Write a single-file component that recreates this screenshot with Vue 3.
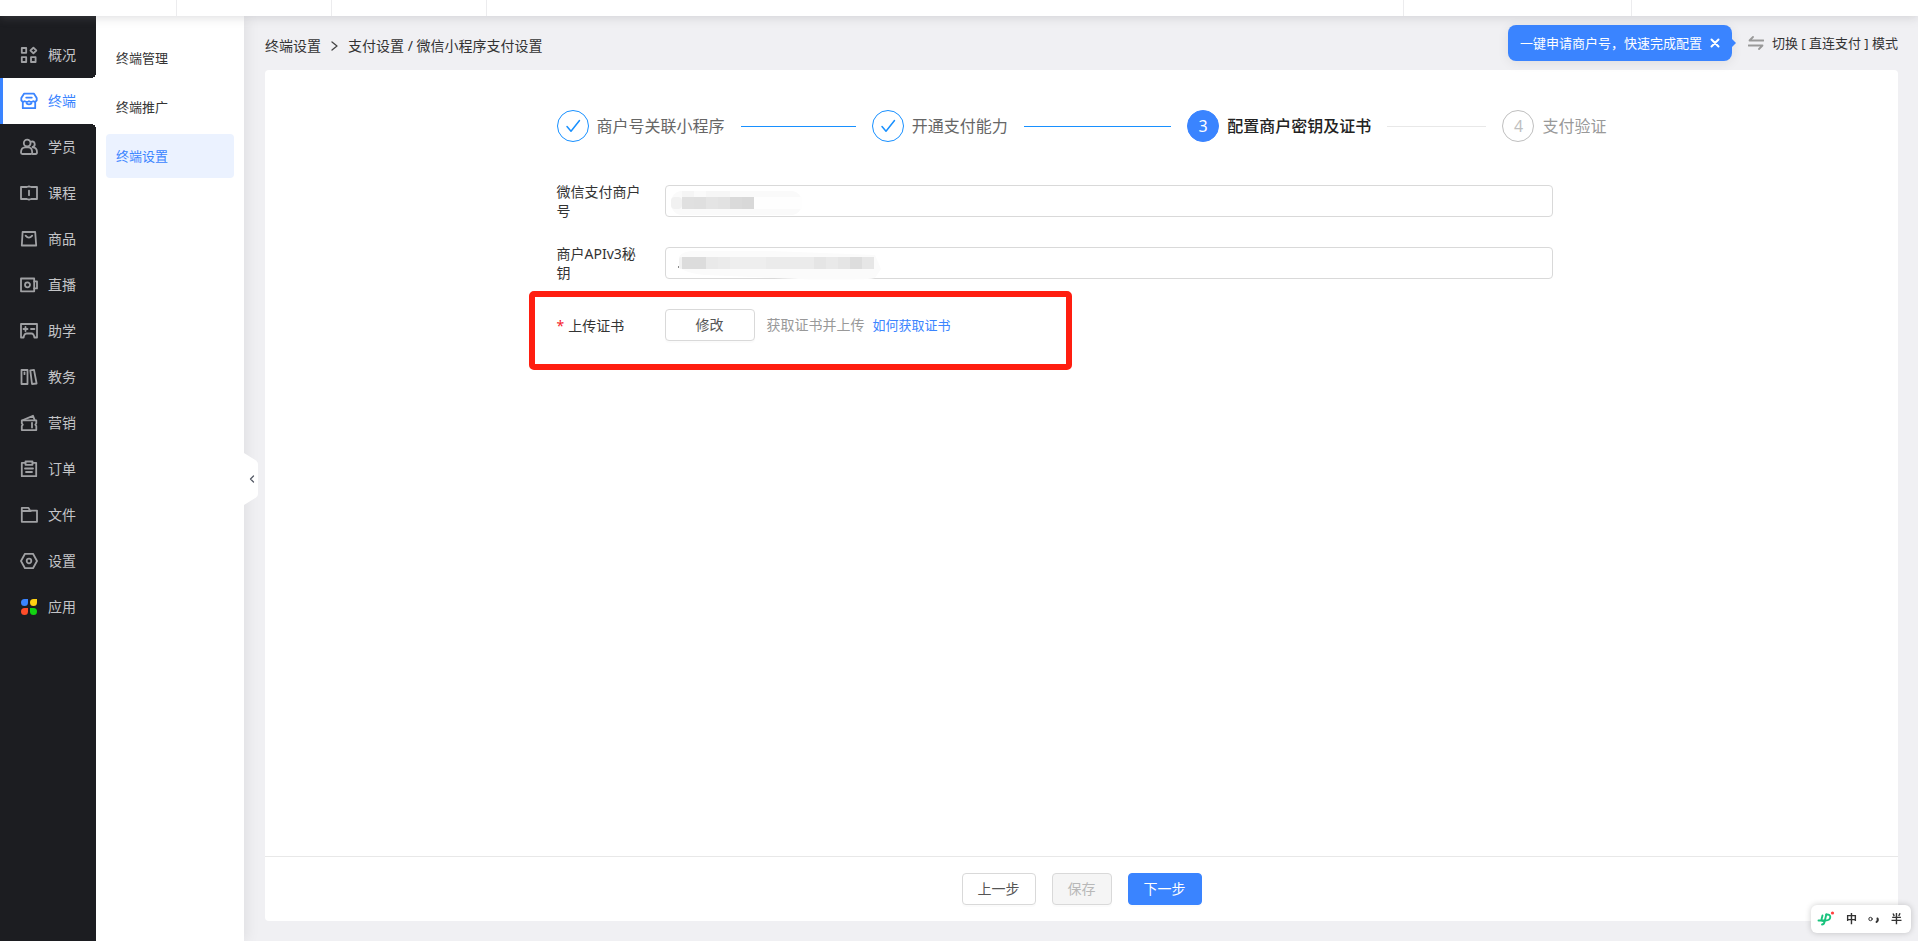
<script setup>
import { ref } from 'vue'

const navItems = [
  { name: '概况', paths: ['M1.8 2h4.4v4.8H1.8z', 'M1.8 11.2h4.4v4.8H1.8z', 'M11 11.2h4.6v4.8H11z', 'M13.4 1.6 16.3 4.5 13.4 7.4 10.5 4.5z'] },
  { name: '终端', active: true, paths: ['M4 1.7h10l2.7 4.2v2.6q-1.5 2-3.4.6-2 1.8-4.3 0-2.3 1.8-4.3 0-1.9 1.4-3.4-.6V5.9z', 'M2.8 10.2v6h12.4v-6', 'M6.2 5.6h5.6', 'M6.6 11.6q2.4 1.6 4.8 0'] },
  { name: '学员', paths: ['M7.2 1.7a3.4 3.4 0 0 1 0 6.8 3.4 3.4 0 0 1 0-6.8z', 'M1 14.5c0-3.2 1.6-5.2 4.2-5.2h3c2.8 0 4 2 4 5.2 0 1-.5 1.5-1.4 1.5H2.4C1.4 16 1 15.5 1 14.5z', 'M11.4 3.6a2.7 2.7 0 0 1 1.2 5.3', 'M12.6 9.3c2.8 0 4.4 2 4.4 5 0 1.2-.5 1.7-1.5 1.7h-3'] },
  { name: '课程', paths: ['M1 3h5.8L9 2.4 11.2 3H17v12h-5.8L9 15.7 6.8 15H1z', 'M9 6.6v4.6'] },
  { name: '商品', paths: ['M2.6 2h12.6l1 13.5H1.8z', 'M5.6 5.6q3.3 4 6.6 0'] },
  { name: '直播', paths: ['M1 2.5h13.2v12.8H1z', 'M14.2 5.4H17v7h-2.8', 'M7.5 6.3a2.5 2.5 0 1 1 0 5 2.5 2.5 0 0 1 0-5z'] },
  { name: '助学', paths: ['M1 2h16v13.5h-2.6q-.6-4-3-4h-4.800q-2.4 0-3 4H1z', 'M5.500 5v4M3.500 7h4', 'M11 7h3.400'] },
  { name: '教务', paths: ['M1.5 2h6v14h-6z', 'M10.3 2.3l3.7-.5 2.600 13.700-4.600.5z', 'M4.500 4.500v1.700'] },
  { name: '营销', paths: ['M1.8 6.3h14.5v3l-1 1.4 1 1.4v4H1.8v-4l1-1.4-1-1.4z', 'M3 6l10-4.2 1.700 4.200', 'M12 8.800v4.800'] },
  { name: '订单', paths: ['M5.5 2.8H1.8v13.4h14.4V2.8h-3.7', 'M5.5 1.500h7v3.300h-7z', 'M5 8.500h8M6 12h6'] },
  { name: '文件', paths: ['M1.8 15.800V1.800h6.700l1.500 2.800h7v11.200z', 'M1.800 5h9'] },
  { name: '设置', paths: ['M5 1.800h8L17 9l-4 7.200H5L1 9z', 'M9 6.700a2.300 2.300 0 1 1 0 4.600 2.300 2.300 0 0 1 0-4.600z'] },
  { name: '应用', colorful: true }
]

const subItems = [
  { name: '终端管理' },
  { name: '终端推广' },
  { name: '终端设置', active: true }
]

const steps = [
  { title: '商户号关联小程序', state: 'done' },
  { title: '开通支付能力', state: 'done' },
  { title: '配置商户密钥及证书', state: 'current' },
  { title: '支付验证', state: 'wait' }
]

const tipVisible = ref(true)
</script>

<template>
  <div class="app">
    <header class="topbar">
      <span class="cell c1"></span>
      <span class="cell c2"></span>
      <span class="cell c2"></span>
      <span class="cell grow"></span>
      <span class="cell c3"></span>
      <span class="cell c4"></span>
    </header>

    <div class="body">
      <nav class="nav" aria-label="主导航">
        <a v-for="item in navItems" :key="item.name" href="#" class="nav-item" :class="{ active: item.active }">
          <svg v-if="item.colorful" class="nav-icon" viewBox="0 0 18 18">
            <path fill="#3a84ff" d="M4.500 1H8v3.500A3.500 3.500 0 1 1 4.500 1z" />
            <path fill="#ffd012" d="M13.500 1H17v3.500A3.500 3.500 0 1 1 13.500 1z" />
            <path fill="#ff4d2a" d="M4.500 10H8v3.500A3.500 3.500 0 1 1 4.500 10z" />
            <path fill="#12d312" d="M10 10h3.500a3.500 3.500 0 1 1-3.500 3.500z" />
          </svg>
          <svg v-else class="nav-icon" viewBox="0 0 18 18">
            <path v-for="d in item.paths" :key="d" :d="d" />
          </svg>
          <span>{{ item.name }}</span>
        </a>
      </nav>

      <aside class="subnav">
        <a v-for="item in subItems" :key="item.name" href="#" class="sub-item" :class="{ active: item.active }">{{ item.name }}</a>
        <button class="collapse" aria-label="收起菜单">
          <svg class="collapse-bg" viewBox="0 0 14 52"><path d="M0 0 12 7.500Q14 9 14 11v30q0 2-2 3.500L0 52z" /></svg>
          <svg class="collapse-arrow" viewBox="0 0 6 8"><path d="M4.500 1 1.500 4l3 3" /></svg>
        </button>
      </aside>

      <main class="main">
        <div class="page-head">
          <div class="crumbs">
            <a href="#">终端设置</a>
            <svg class="crumb-arrow" viewBox="0 0 7 10"><path d="M1 1l5 4-5 4" /></svg>
            <span>支付设置 / 微信小程序支付设置</span>
          </div>
          <div class="mode">
            <div v-if="tipVisible" class="tip">
              <span>一键申请商户号，快速完成配置</span>
              <button class="tip-close" aria-label="关闭" @click="tipVisible = false">
                <svg viewBox="0 0 10 10"><path d="M1.500 1.500l7 7M8.500 1.500l-7 7" /></svg>
              </button>
            </div>
            <button class="switch">
              <svg class="swap" viewBox="0 0 16 14"><path d="M15.500 4.500H1.500L5 1M.5 9.500h14L11 13" /></svg>
              <span>切换 [ 直连支付 ] 模式</span>
            </button>
          </div>
        </div>

        <section class="card">
          <div class="content">
            <ol class="steps">
              <li v-for="(step, i) in steps" :key="step.title" class="step" :class="step.state">
                <span class="step-icon">
                  <svg v-if="step.state === 'done'" viewBox="0 0 16 16"><path d="M2 8.500l4 4.700L14.500 2.500" /></svg>
                  <template v-else>{{ i + 1 }}</template>
                </span>
                <span class="step-title">{{ step.title }}</span>
              </li>
            </ol>

            <form class="form" @submit.prevent>
              <div class="row">
                <label class="label" for="mch">微信支付商户号</label>
                <div class="field">
                  <input id="mch" class="input" type="text" />
                  <svg class="mask" width="140" height="32" viewBox="0 0 140 32" aria-hidden="true">
                    <rect x="6" y="6" width="131" height="24" rx="11" fill="#fafafa" />
                    <rect x="89" y="12" width="48" height="12" fill="#fefefe" />
                    <rect x="17" y="6" width="12" height="6" fill="#f5f5f5" />
                    <rect x="41" y="6" width="24" height="6" fill="#f6f6f6" />
                    <rect x="6" y="12" width="11" height="12" rx="4" fill="#f1f1f1" />
                    <rect x="17" y="12" width="12" height="12" fill="#e0e0e0" />
                    <rect x="29" y="12" width="12" height="12" fill="#dfdfdf" />
                    <rect x="41" y="12" width="12" height="12" fill="#e4e4e4" />
                    <rect x="53" y="12" width="12" height="12" fill="#e2e2e2" />
                    <rect x="65" y="12" width="12" height="12" fill="#dadada" />
                    <rect x="77" y="12" width="12" height="12" fill="#d8d8d8" />
                  </svg>
                </div>
              </div>
              <div class="row">
                <label class="label" for="key">商户APIv3秘钥</label>
                <div class="field">
                  <input id="key" class="input" type="text" />
                  <svg class="mask" width="220" height="34" viewBox="0 0 220 34" aria-hidden="true">
                    <path d="M14 10q2-5 12-6l80 0 104 4 6 14-6 9q-4 2-64 1.500L40 28q-20-2-26-8z" fill="#fbfbfb" />
                    <rect x="14" y="10" width="4" height="12" rx="2" fill="#f2f2f2" />
                    <rect x="17" y="10" width="24" height="12" fill="#dcdcdc" />
                    <rect x="41" y="10" width="12" height="12" fill="#e9e9e9" />
                    <rect x="53" y="10" width="12" height="12" fill="#ebebeb" />
                    <rect x="65" y="10" width="36" height="12" fill="#eeeeee" />
                    <rect x="101" y="10" width="48" height="12" fill="#ebebeb" />
                    <rect x="149" y="10" width="12" height="12" fill="#e5e5e5" />
                    <rect x="161" y="10" width="12" height="12" fill="#e9e9e9" />
                    <rect x="173" y="10" width="12" height="12" fill="#e5e5e5" />
                    <rect x="185" y="10" width="12" height="12" fill="#dddddd" />
                    <rect x="197" y="10" width="12" height="12" fill="#e6e6e6" />
                    <rect x="13" y="19" width="1" height="2" fill="#888888" />
                  </svg>
                </div>
              </div>
              <div class="row upload">
                <label class="label" for="cert"><span class="star">*</span>上传证书</label>
                <div class="field">
                  <button id="cert" class="btn modify" type="button">修改</button>
                  <span class="hint">获取证书并上传</span>
                  <a class="help" href="#">如何获取证书</a>
                </div>
                <span class="highlight" aria-hidden="true"></span>
              </div>
            </form>
          </div>

          <footer class="actions">
            <button class="btn">上一步</button>
            <button class="btn" disabled>保存</button>
            <button class="btn primary">下一步</button>
          </footer>
        </section>
      </main>
    </div>

    <div class="ime">
      <svg class="ime-logo" viewBox="0 0 18 16">
        <path d="M1.500 9.500h7q4.500 0 4.800-3.500 0-2.800-4-2.500" />
        <path d="M5.500 4.500 4.600 8q-.3 2.500 3 2M9.300 3.500l-1.800 7.500q-.6 2.500-2.500 2.500" />
        <circle cx="15.500" cy="2" r="1.600" />
      </svg>
      <b>中</b>
      <svg class="punct" viewBox="0 0 12 10">
        <circle cx="2.500" cy="5" r="1.700" />
        <path d="M9.500 4.500q1 2-1 3.500" />
      </svg>
      <b>半</b>
    </div>
  </div>
</template>

<style>
body {
  margin: 0;
}
</style>

<style scoped>
.app {
  display: flex;
  flex-direction: column;
  min-height: 100vh;
  background: #f0f0f3;
  color: #333;
  font-family: "Noto Sans", "Noto Sans CJK SC", sans-serif;
  font-size: 14px;
  line-height: 20px;
}
.app * {
  box-sizing: border-box;
}
a {
  color: inherit;
  text-decoration: none;
}
button {
  font: inherit;
  cursor: pointer;
}
svg {
  display: block;
  fill: none;
  stroke-linecap: round;
  stroke-linejoin: round;
}
.topbar {
  position: relative;
  z-index: 3;
  display: flex;
  height: 16px;
  background: #fff;
  box-shadow: 0 2px 10px rgba(130, 130, 135, 0.25);
}
.cell {
  border-right: 1px solid #ececee;
}
.cell:last-child {
  border-right: 0;
}
.c1 {
  width: 177px;
}
.c2 {
  width: 155px;
}
.c3 {
  width: 228px;
}
.c4 {
  width: 286px;
}
.grow {
  flex: 1;
}
.body {
  display: flex;
  flex: 1;
}
.nav {
  position: relative;
  z-index: 2;
  width: 96px;
  padding-top: 16px;
  background: #1c1d21;
}
.nav-item {
  position: relative;
  display: flex;
  align-items: center;
  gap: 10px;
  height: 46px;
  padding-left: 20px;
  color: #c4c5c8;
}
.nav-icon {
  width: 18px;
  height: 18px;
  stroke: #a0a1a4;
  stroke-width: 1.8;
}
.nav-icon path[fill] {
  stroke: none;
}
.nav-item.active {
  background: #fff;
  color: #3a84ff;
  box-shadow: inset 3px 0 #3a84ff;
}
.nav-item.active .nav-icon {
  stroke: #3a84ff;
}
.nav-item.active::before,
.nav-item.active::after {
  content: "";
  position: absolute;
  right: 0;
  width: 5px;
  height: 5px;
}
.nav-item.active::before {
  bottom: 100%;
  background: radial-gradient(circle at 0 0, transparent 5px, #fff 5px);
}
.nav-item.active::after {
  top: 100%;
  background: radial-gradient(circle at 0 100%, transparent 5px, #fff 5px);
}
.subnav {
  position: relative;
  z-index: 1;
  display: flex;
  flex-direction: column;
  gap: 5px;
  width: 148px;
  padding: 20px 10px;
  background: #fff;
  box-shadow: 2px 0 14px rgba(0, 0, 0, 0.08);
}
.sub-item {
  height: 44px;
  padding-left: 10px;
  border-radius: 4px;
  font-size: 13px;
  line-height: 44px;
}
.sub-item.active {
  background: #ebf2ff;
  color: #3a84ff;
}
.collapse {
  position: absolute;
  top: 50%;
  left: 100%;
  width: 14px;
  height: 52px;
  margin-top: -26px;
  padding: 0;
  border: 0;
  background: none;
}
.collapse-bg {
  width: 14px;
  height: 52px;
  fill: #fff;
}
.collapse-arrow {
  position: absolute;
  top: 22px;
  left: 5px;
  width: 6px;
  height: 8px;
  stroke: #555a66;
  stroke-width: 1.3;
}
.main {
  display: flex;
  flex: 1;
  flex-direction: column;
  min-width: 0;
  padding: 0 20px 20px 21px;
}
.page-head {
  display: flex;
  justify-content: space-between;
  height: 54px;
}
.crumbs {
  display: flex;
  align-items: center;
  gap: 10px;
  height: 60px;
}
.crumb-arrow {
  width: 7px;
  height: 10px;
  stroke: #444;
  stroke-width: 1.3;
}
.mode {
  display: flex;
  align-items: center;
  gap: 16px;
  font-size: 13px;
}
.tip {
  position: relative;
  display: flex;
  align-items: center;
  gap: 8px;
  height: 36px;
  padding: 0 12px;
  border-radius: 8px;
  background: #3a84ff;
  box-shadow: 0 2px 12px rgba(0, 0, 0, 0.08);
  color: #fff;
}
.tip::after {
  content: "";
  position: absolute;
  top: 14px;
  left: 100%;
  border: 4px solid transparent;
  border-left-color: #3a84ff;
  border-right: 0;
}
.tip-close {
  padding: 0;
  border: 0;
  background: none;
}
.tip-close svg {
  width: 10px;
  height: 10px;
  stroke: #fff;
  stroke-width: 2;
}
.switch {
  display: flex;
  align-items: center;
  gap: 8px;
  padding: 0;
  border: 0;
  background: none;
  color: #333;
}
.swap {
  width: 16px;
  height: 14px;
  stroke: #999;
  stroke-width: 1.8;
}
.card {
  display: flex;
  flex: 1;
  flex-direction: column;
  border-radius: 4px;
  background: #fff;
}
.content {
  flex: 1;
  width: 100%;
  max-width: 1050px;
  margin: 0 auto;
  padding-top: 40px;
}
.steps {
  display: flex;
  gap: 16px;
  margin: 0;
  padding: 0;
  list-style: none;
  font-size: 16px;
  line-height: 32px;
}
.step {
  display: flex;
  flex: 1;
  align-items: center;
  white-space: nowrap;
}
.step:last-child {
  flex: none;
}
.step-icon {
  display: flex;
  align-items: center;
  justify-content: center;
  width: 32px;
  height: 32px;
  margin-right: 8px;
  border: 1px solid #1890ff;
  border-radius: 50%;
}
.step-icon svg {
  width: 16px;
  height: 16px;
  stroke: #1890ff;
  stroke-width: 1.5;
}
.step:not(:last-child)::after {
  content: "";
  flex: 1;
  height: 1px;
  margin-left: 16px;
  background: #1890ff;
}
.done {
  color: #666;
}
.current {
  color: #222;
  font-weight: 500;
}
.current .step-icon {
  border-color: #3a84ff;
  background: #3a84ff;
  color: #fff;
  font-weight: 400;
}
.step.current::after {
  background: #e8e8e8;
}
.wait {
  color: #999;
}
.wait .step-icon {
  border-color: #bfbfbf;
  color: #bfbfbf;
}
.form {
  display: flex;
  flex-direction: column;
  gap: 24px;
  padding: 40px 54px 0 0;
}
.row {
  position: relative;
  display: flex;
  align-items: center;
  height: 38px;
}
.label {
  width: 86px;
  margin-right: 22px;
  line-height: 19px;
}
.star {
  margin-right: 4px;
  color: #f5222d;
}
.field {
  position: relative;
  display: flex;
  flex: 1;
  align-items: center;
}
.input {
  width: 100%;
  height: 32px;
  padding: 0 12px;
  border: 1px solid #d9d9d9;
  border-radius: 4px;
  background: transparent;
  font: inherit;
}
.mask {
  position: absolute;
  top: 0;
  left: 0;
}
.btn {
  height: 32px;
  padding: 0 15px;
  border: 1px solid #d9d9d9;
  border-radius: 4px;
  background: #fff;
  box-shadow: 0 2px 0 rgba(0, 0, 0, 0.016);
  color: #555;
  line-height: 20px;
}
.btn:disabled {
  background: #f5f5f5;
  color: #b8b8b8;
}
.btn.primary {
  border-color: #3a84ff;
  background: #3a84ff;
  color: #fff;
}
.modify {
  width: 90px;
}
.hint {
  margin: 0 8px 0 12px;
  color: #999;
}
.help {
  color: #3a84ff;
  font-size: 13px;
}
.highlight {
  position: absolute;
  top: -15px;
  left: -28px;
  width: 543px;
  height: 79px;
  border: 6px solid #ff1e10;
  border-radius: 5px;
  pointer-events: none;
}
.actions {
  display: flex;
  justify-content: center;
  gap: 16px;
  padding: 16px;
  border-top: 1px solid #e8e8e8;
}
.ime {
  position: fixed;
  right: 7px;
  bottom: 8px;
  z-index: 5;
  display: flex;
  align-items: center;
  justify-content: space-between;
  width: 100px;
  height: 28px;
  padding: 0 9px 0 6px;
  border-radius: 6px;
  background: #fff;
  box-shadow: 0 0 6px rgba(0, 0, 0, 0.2);
  font-size: 11px;
}
.ime-logo {
  width: 18px;
  height: 16px;
  stroke: #19c37d;
  stroke-width: 1.9;
}
.ime-logo circle {
  fill: #ff4040;
  stroke: none;
}
.punct {
  width: 12px;
  height: 10px;
  stroke: #333;
}
.punct path {
  stroke-width: 2;
}
</style>
